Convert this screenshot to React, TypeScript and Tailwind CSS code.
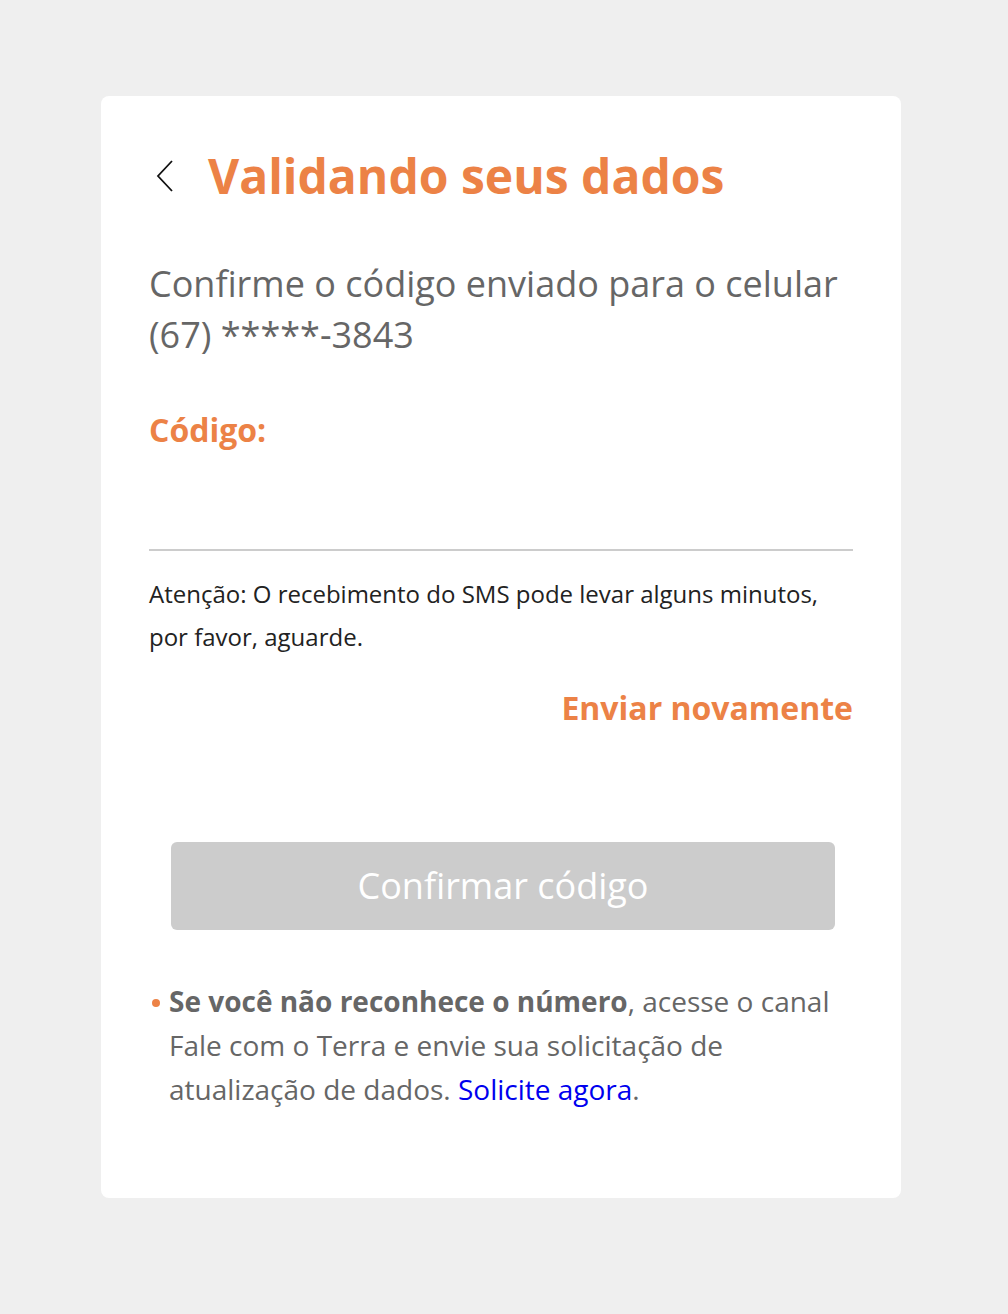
import React from "react";

export default function App() {
  return (
    <div
      className="min-h-[1314px] w-full bg-[#efefef] pt-[96px]"
      style={{ fontFamily: '"Open Sans", "Liberation Sans", sans-serif' }}
    >
      <div className="ml-[101px] w-[800px] h-[1102px] rounded-[8px] bg-white px-[48px] pt-[50px]">
        <div className="flex items-center h-[60px]">
          <svg width="20" height="36" viewBox="0 0 20 36" className="ml-[6px] mr-[33px]">
            <path d="M17 3 L3 18 L17 33" fill="none" stroke="#111" strokeWidth="1.8" />
          </svg>
          <h1 className="text-[48px] font-bold text-[#ec8246] leading-none">
            Validando seus dados
          </h1>
        </div>
        <p className="mt-[52px] text-[36px] leading-[51px] text-[#666]">
          Confirme o código enviado para o celular
          <br />
          (67) *****-3843
        </p>
        <div className="mt-[50px] text-[32px] font-bold leading-[40px] text-[#ec8246]">Código:</div>
        <div className="mt-[99px] h-[2px] bg-[#cccccc]" />
        <p className="mt-[21px] text-[24px] leading-[43px] text-[#222]">
          Atenção: O recebimento do SMS pode levar alguns minutos,
          <br />
          por favor, aguarde.
        </p>
        <div className="mt-[30px] flex justify-end">
          <span className="text-[32px] font-bold leading-[40px] text-[#ec8246]">Enviar novamente</span>
        </div>
        <div className="mt-[114px] flex justify-center pl-[4px]">
          <button className="h-[88px] w-[664px] rounded-[6px] bg-[#cccccc] text-[36px] text-white">
            Confirmar código
          </button>
        </div>
        <div className="mt-[49px] flex">
          <span className="mt-[20px] mr-[9px] ml-[3px] h-[8px] w-[8px] shrink-0 rounded-full bg-[#ec8246]" />
          <p className="text-[28px] leading-[44px] text-[#666]">
            <b className="font-bold">Se você não reconhece o número</b>, acesse o canal Fale com o Terra e envie sua solicitação de atualização de dados.{" "}
            <a className="text-[#0000ee]">Solicite agora</a>.
          </p>
        </div>
      </div>
    </div>
  );
}
